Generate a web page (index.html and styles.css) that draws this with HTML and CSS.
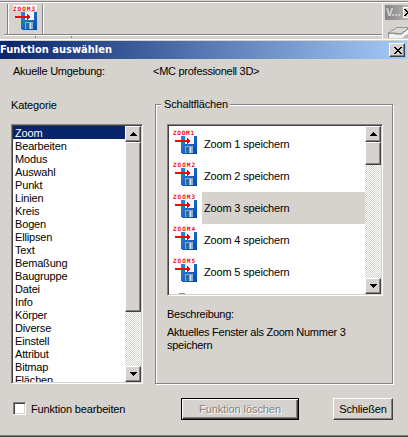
FILE: index.html
```
<!DOCTYPE html>
<html lang="de">
<head>
    <meta charset="UTF-8">
    <title>Funktion auswählen</title>
    <link rel="stylesheet" href="styles.css">
</head>
<body>
<svg class="defs">
    <defs>
        <linearGradient id="blue" x1="0" y1="0" x2="1" y2="1">
            <stop offset="0" stop-color="#3484d4"/>
            <stop offset=".5" stop-color="#1868c0"/>
            <stop offset="1" stop-color="#0848a0"/>
        </linearGradient>
        <!-- Diskette mit rotem Pfeil -->
        <g id="disk">
            <path d="M8 7h16v18H9l-1-1z" fill="url(#blue)"/>
            <path d="M12 7h9v8h-9z" fill="#f4f8fc"/>
            <path d="M12 17h8v7h-8z" fill="#8cacc8"/>
            <path d="M13 18h3v6h-3z" fill="#2868a8"/>
            <path d="M17 18h1v6h-1z" fill="#d8e4ec"/>
            <path d="M2 11h14v2H2z" fill="#f00"/>
            <path d="M14 9h1v1h1v1h1v2h-1v1h-1v1h-1z" fill="#f00"/>
        </g>
    </defs>
</svg>
<div class="toolbar">
    <div class="tools">
        <svg class="icon" width="26" height="26"><rect width="24" height="6" fill="#fff"/><text x="0" y="5.5" textLength="22">ZOOM3</text><use href="#disk"/></svg>
    </div>
    <div class="palette">
        <div class="palette-title"><span>V...</span><i><svg width="6" height="7"><path d="M1 0l6 7M7 0l-6 7" fill="none" stroke="#000" stroke-width="1.5"/></svg></i></div>
        <svg width="23" height="12"><path d="M2 7l10-6h11v11H2z" fill="#b8b8b8"/><path d="M4 6l9-5h10v1l-7 5z" fill="#d8d8d8"/><path d="M3 8l12 1 8-6v4l-7 5H3z" fill="#f4f4f4"/><path d="M2 7l10-6h11M2 7l13 1 8-6M2 7v5" fill="none" stroke="#949494"/></svg>
    </div>
</div>
<div class="dialog">
    <div class="title"><h1>Funktion auswählen</h1><span class="close"><svg width="10" height="8"><path d="M1 0h2v1h1v1h2V1h1V0h2v1H8v1H7v1H6v1h1v1h1v1h1v1H7V6H6V5H4v1H3v1H1V6h1V5h1V4h1V3H3V2H2V1H1z"/></svg></span></div>
    <div class="env"><span class="env-name">Akuelle Umgebung:</span><span class="env-value">&lt;MC professionell 3D&gt;</span></div>
    <div class="main">
        <div class="left">
            <div class="label">Kategorie</div>
            <div class="list categories">
                <ul>
                    <li class="on">Zoom</li>
                    <li>Bearbeiten</li>
                    <li>Modus</li>
                    <li>Auswahl</li>
                    <li>Punkt</li>
                    <li>Linien</li>
                    <li>Kreis</li>
                    <li>Bogen</li>
                    <li>Ellipsen</li>
                    <li>Text</li>
                    <li>Bemaßung</li>
                    <li>Baugruppe</li>
                    <li>Datei</li>
                    <li>Info</li>
                    <li>Körper</li>
                    <li>Diverse</li>
                    <li>Einstell</li>
                    <li>Attribut</li>
                    <li>Bitmap</li>
                    <li>Flächen</li>
                </ul>
                <div class="scroll">
                    <span class="btn"><svg width="7" height="4"><path d="M3 0h1v1h1v1h1v1h1v1H0V3h1V2h1V1h1z"/></svg></span>
                    <span class="thumb"></span>
                    <span class="btn down"><svg width="7" height="4"><path d="M0 0h7v1H6v1H5v1H4v1H3V3H2V2H1V1H0z"/></svg></span>
                </div>
            </div>
        </div>
        <div class="group">
            <div class="legend"><span>Schaltflächen</span></div>
            <div class="list buttons">
                <ul>
                    <li><svg class="icon" width="26" height="26"><text x="0" y="5.5" textLength="21">ZOOM1</text><use href="#disk"/></svg><span>Zoom 1 speichern</span></li>
                    <li><svg class="icon" width="26" height="26"><text x="0" y="5.5" textLength="22">ZOOM2</text><use href="#disk"/></svg><span>Zoom 2 speichern</span></li>
                    <li class="on"><svg class="icon" width="26" height="26"><text x="0" y="5.5" textLength="22">ZOOM3</text><use href="#disk"/></svg><span>Zoom 3 speichern</span></li>
                    <li><svg class="icon" width="26" height="26"><text x="0" y="5.5" textLength="22">ZOOM4</text><use href="#disk"/></svg><span>Zoom 4 speichern</span></li>
                    <li><svg class="icon" width="26" height="26"><text x="0" y="5.5" textLength="22">ZOOM5</text><use href="#disk"/></svg><span>Zoom 5 speichern</span></li>
                    <li><svg class="icon" width="26" height="26"><path d="M6 4h6v6H5V5h1z" fill="#8486b8"/></svg></li>
                </ul>
                <div class="scroll">
                    <span class="btn"><svg width="7" height="4"><path d="M3 0h1v1h1v1h1v1h1v1H0V3h1V2h1V1h1z"/></svg></span>
                    <span class="thumb"></span>
                    <span class="btn down"><svg width="7" height="4"><path d="M0 0h7v1H6v1H5v1H4v1H3V3H2V2H1V1H0z"/></svg></span>
                </div>
            </div>
            <div class="desc-title">Beschreibung:</div>
            <p class="desc"><span>Aktuelles Fenster als Zoom Nummer 3</span><br>speichern</p>
        </div>
    </div>
    <div class="footer">
        <span class="check"></span>
        <span class="check-label">Funktion bearbeiten</span>
        <span class="push disabled">Funktion löschen</span>
        <span class="push close-btn">Schließen</span>
    </div>
</div>
</body>
</html>
```

FILE: styles.css
```
*{
    margin:0;
    padding:0;
    box-sizing: border-box;
    list-style: none;
}
html,body{
    height: 100%;
    overflow: hidden;
}
body{
    background: #d6d3ce;
    color: #000;
    font: 11px/13px "Liberation Sans", Arial, sans-serif;
    letter-spacing: -.16px;
    white-space: nowrap;
}
svg{
    display: block;
    flex: none;
    shape-rendering: crispEdges;
}
.defs{
    width: 0;
    height: 0;
}
.icon text{
    font: bold 6px "DejaVu Sans Mono", monospace;
    letter-spacing: 0;
    fill: #f00;
}
/* toolbar */
.toolbar{
    height: 39px;
    display: flex;
    border-top: 1px solid #d6d3ce;
    background: linear-gradient(#848284,#848284) 0 0/100% 1px no-repeat,
        linear-gradient(#fff,#fff) 0 1px/100% 1px no-repeat,
        linear-gradient(#848284,#848284) 35px 35px/1px 2px no-repeat,
        linear-gradient(#848284,#848284) 71px 35px/1px 2px no-repeat;
}
.tools{
    width: 378px;
    height: 31px;
    margin: 3px 0 0 4px;
    padding: 0 0 0 9px;
    border-bottom: 1px solid #848284;
    box-shadow: 0 1px #fff;
    background: linear-gradient(#848284,#848284) 3px 0/1px 100% no-repeat,
        linear-gradient(#fff,#fff) 4px 0/1px 100% no-repeat,
        linear-gradient(#848284,#848284) 38px 0/1px 100% no-repeat,
        linear-gradient(#fff,#fff) 39px 0/1px 100% no-repeat;
}
.tools .icon{
    margin-top: 1px;
}
.palette{
    width: 26px;
    height: 36px;
    margin-top: 2px;
    padding: 2px 0 0 2px;
    border-left: 1px solid #fff;
    overflow: hidden;
}
.palette-title{
    height: 15px;
    display: flex;
    justify-content: space-between;
    background: linear-gradient(90deg,#848284,#b5b5b5);
    color: #d6d3ce;
    font: bold 10px/16px "DejaVu Sans Condensed", "DejaVu Sans", sans-serif;
    padding-left: 1px;
}
.palette-title span{
    width: 16px;
    letter-spacing: -.3px;
}
.palette-title i{
    width: 5px;
    height: 11px;
    margin-top: 2px;
    background: #d6d3ce;
    border: 1px solid #fff;
    border-right: none;
    overflow: hidden;
}
.palette i svg{
    margin: 1px 0 0;
}
.palette svg{
    margin: 6px 0 0 1px;
}
/* dialog */
.dialog{
    height: 398px;
    border-top: 1px solid #fff;
    border-bottom: 1px solid #424142;
    box-shadow: inset 0 -1px #848284;
}
.title{
    height: 18px;
    margin: 1px 1px 0 0;
    padding-right: 2px;
    display: flex;
    align-items: center;
    justify-content: space-between;
    background: linear-gradient(90deg,#08246b,#a5cbf7);
}
.title h1{
    color: #fff;
    font: bold 11px/18px "DejaVu Sans Condensed", "DejaVu Sans", sans-serif;
    letter-spacing: 0;
}
.close,.btn,.thumb,.push{
    background: #d6d3ce;
    border: 1px solid;
    border-color: #fff #424142 #424142 #fff;
    box-shadow: inset -1px -1px #848284;
}
.close{
    width: 16px;
    height: 14px;
    padding: 3px 0 0 3px;
}
.env{
    display: flex;
    padding: 6px 0 0 13px;
    letter-spacing: -.25px;
}
.env-name{
    width: 140px;
}
.env-value{
    letter-spacing: -.27px;
}
.main{
    display: flex;
    gap: 12px;
    padding: 20px 0 0 11px;
}
.left{
    width: 132px;
}
.label{
    height: 26px;
    line-height: 15px;
}
.list{
    display: flex;
    border: 1px solid;
    border-color: #848284 #fff #fff #848284;
    background: #fff;
    box-shadow: inset 1px 1px #424142, inset -1px -1px #d6d3ce;
    padding: 1px;
    overflow: hidden;
}
.list ul{
    flex: 1;
    overflow: hidden;
}
.categories{
    height: 260px;
}
.categories li{
    height: 13px;
    padding-left: 2px;
    line-height: 14px;
}
.categories .on{
    background: #08246b;
    color: #fff;
}
.scroll{
    width: 16px;
    display: flex;
    flex-direction: column;
    background: repeating-conic-gradient(#fff 0 25%,#d6d3ce 0 50%) 0 0/2px 2px;
}
.btn{
    height: 16px;
    display: flex;
    align-items: center;
    justify-content: center;
}
.down{
    margin-top: auto;
}
.categories .thumb{
    height: 170px;
}
.buttons .thumb{
    height: 23px;
}
.group{
    width: 238px;
    height: 280px;
    margin-top: 6px;
    padding: 0 10px 0 11px;
    border: 1px solid #848284;
    box-shadow: 1px 1px #fff, inset 1px 1px #fff;
}
.legend{
    display: flex;
    align-items: flex-start;
    height: 19px;
    margin-left: -6px;
}
.legend span{
    margin-top: -7px;
    padding: 0 2px 0 3px;
    background: #d6d3ce;
}
.buttons{
    width: 216px;
    height: 172px;
}
.buttons ul{
    padding: 2px 0 0 4px;
}
.buttons li{
    height: 32px;
    display: flex;
}
.buttons .icon{
    margin-top: 1px;
}
.buttons li span{
    flex: 1;
    margin-left: 3px;
    padding-left: 2px;
    line-height: 33px;
}
.buttons .on span{
    background: #d6d3ce;
}
.desc-title{
    margin-top: 12px;
    letter-spacing: -.27px;
}
.desc{
    margin-top: 5px;
    letter-spacing: -.26px;
}
.footer{
    display: flex;
    padding: 14px 0 0 13px;
}
.check{
    width: 13px;
    height: 13px;
    margin-top: 4px;
    border: 1px solid;
    border-color: #848284 #fff #fff #848284;
    background: #fff;
    box-shadow: inset 1px 1px #424142, inset -1px -1px #d6d3ce;
}
.check-label{
    width: 150px;
    margin: 5px 0 0 5px;
}
.push{
    height: 22px;
    line-height: 21px;
    text-align: center;
}
.disabled{
    width: 118px;
    border-color: #000;
    box-shadow: inset 1px 1px #fff, inset -1px -1px #424142, inset -2px -2px #848284;
    color: #848284;
    letter-spacing: -.08px;
    text-shadow: 1px 1px #fff;
}
.close-btn{
    width: 60px;
    margin-left: 34px;
}
```
